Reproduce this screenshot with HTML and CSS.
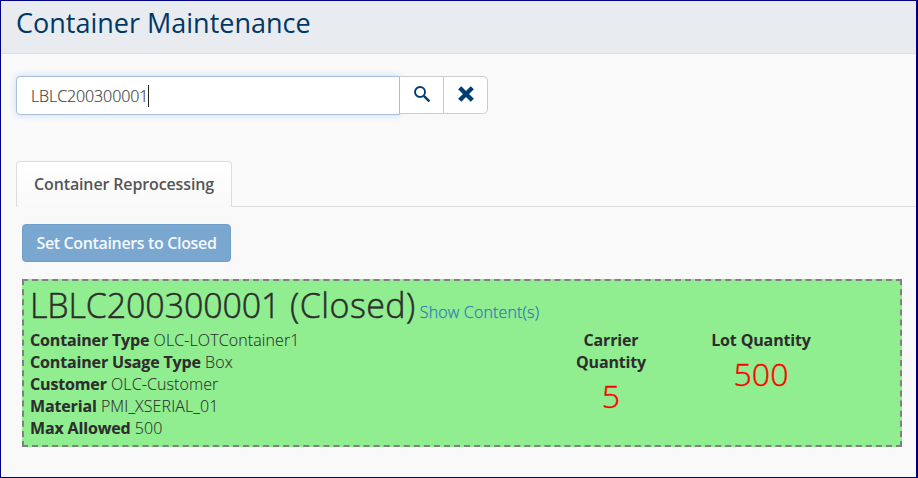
FILE: index.html
```html
<!DOCTYPE html>
<html lang="en">
<head>
<meta charset="utf-8">
<title>Container Maintenance</title>
<link rel="stylesheet" href="styles.css">
</head>
<body>
<div class="page">
  <header class="page-header"><h1>Container Maintenance</h1></header>
  <main>
    <div class="search">
      <div class="search-input"><span>LBLC200300001</span><i class="caret"></i></div>
      <button class="addon" aria-label="Search"><svg width="18" height="18" viewBox="0 0 18 18"><circle cx="7" cy="7" r="5" fill="none" stroke="#003d73" stroke-width="1.9"/><path d="M10.8 10.8L16.4 16.4" stroke="#003d73" stroke-width="2.4"/></svg></button>
      <button class="addon last" aria-label="Clear"><svg width="18" height="18" viewBox="0 0 18 18"><path d="M2.7 2.7L15.3 15.3M15.3 2.7L2.7 15.3" stroke="#003d73" stroke-width="4.4"/></svg></button>
    </div>
    <nav class="tabs"><a class="tab">Container Reprocessing</a></nav>
    <div class="content">
      <button class="primary">Set Containers to Closed</button>
      <section class="card">
        <div class="card-title"><span class="name">LBLC200300001 <span class="status">(Closed)</span></span> <a>Show Content(s)</a></div>
        <div class="card-body">
          <div class="details">
            <div><b>Container Type</b> OLC-LOTContainer1</div>
            <div><b>Container Usage Type</b> Box</div>
            <div><b>Customer</b> OLC-Customer</div>
            <div><b>Material</b> PMI_XSERIAL_01</div>
            <div><b>Max Allowed</b> 500</div>
          </div>
          <div class="quantity carrier"><b>Carrier Quantity</b><span>5</span></div>
          <div class="quantity lot"><b>Lot Quantity</b><span>500</span></div>
        </div>
      </section>
    </div>
  </main>
</div>
</body>
</html>
```
FILE: styles.css
```css
* { box-sizing: border-box; }
body {
  margin: 0;
  background: #000;
  color: #2d2d2d;
  font: 300 16px/22px "Open Sans", sans-serif;
}
.page {
  width: 917px;
  height: 478px;
  background: #f9f9f9;
  border: 1px solid #000080;
  overflow: hidden;
}
.page-header {
  height: 53px;
  padding: 3px 0 0 15px;
  background: #e8ebf0;
  border-bottom: 1px solid #dcdfe6;
}
h1 {
  margin: 0;
  color: #003865;
  font-size: 27px;
  font-weight: 400;
  line-height: 38px;
}
.search {
  display: flex;
  align-items: flex-start;
  padding: 22px 0 0 15px;
}
.search-input {
  display: flex;
  align-items: center;
  width: 384px;
  height: 39px;
  padding: 1px 0 0 14px;
  background: #fff;
  border: 1px solid #a6bfdb;
  border-radius: 4px 0 0 4px;
  box-shadow: 0 0 7px #c3dcf3;
  color: #444;
  letter-spacing: -0.1px;
  -webkit-text-stroke: 0.2px currentColor;
}
.caret { width: 1px; height: 22px; background: #222; }
.addon {
  display: flex;
  align-items: center;
  justify-content: center;
  width: 44px;
  height: 38px;
  padding: 0 0 2px;
  background: #fff;
  border: 1px solid #ccc;
  border-left: 0;
}
.addon.last { border-radius: 0 5px 5px 0; }
.tabs {
  display: flex;
  margin: 46px 0 0 15px;
}
.tabs::after { content: ""; flex: 1; border-bottom: 1px solid #ddd; }
.tab {
  width: 216px;
  height: 46px;
  padding: 11px 0 0 17px;
  background: linear-gradient(#fff, #f9f9f9);
  border: 1px solid #ddd;
  border-bottom: 0;
  border-radius: 4px 4px 0 0;
  color: #555;
  font-weight: 600;
  letter-spacing: -0.13px;
  white-space: nowrap;
}
.content { padding: 17px 14px 0 21px; }
.primary {
  display: block;
  width: 209px;
  height: 38px;
  padding: 0;
  background: #7aa7d0;
  border: 1px solid #709fc9;
  border-radius: 4px;
  color: #f4f8fc;
  font: 600 16px/22px "Open Sans", sans-serif;
  letter-spacing: -0.35px;
}
.card {
  height: 168px;
  margin-top: 17px;
  padding: 0 6px;
  background: #90ee90;
  border: 2px dashed #808080;
}
.card-title { height: 48px; line-height: 48px; white-space: nowrap; }
.name {
  font-size: 34px;
  letter-spacing: -0.12px;
  -webkit-text-stroke: 0.5px currentColor;
}
.status { margin-left: 1px; letter-spacing: 0.45px; }
.card-title a {
  color: #337ab7;
  letter-spacing: 0.15px;
  -webkit-text-stroke: 0.25px currentColor;
}
.card-body { display: flex; }
.card b { font-weight: 700; letter-spacing: -0.15px; }
.details {
  width: 531px;
  white-space: nowrap;
  letter-spacing: 0.1px;
  -webkit-text-stroke: 0.1px currentColor;
}
.quantity {
  display: flex;
  flex-direction: column;
  align-items: center;
  width: 100px;
  text-align: center;
}
.quantity.carrier { padding: 0 10px; }
.quantity.lot { width: 110px; margin-left: 45px; }
.quantity span {
  color: #f00;
  font-size: 32px;
  line-height: 46px;
  -webkit-text-stroke: 0.4px currentColor;
}
```
